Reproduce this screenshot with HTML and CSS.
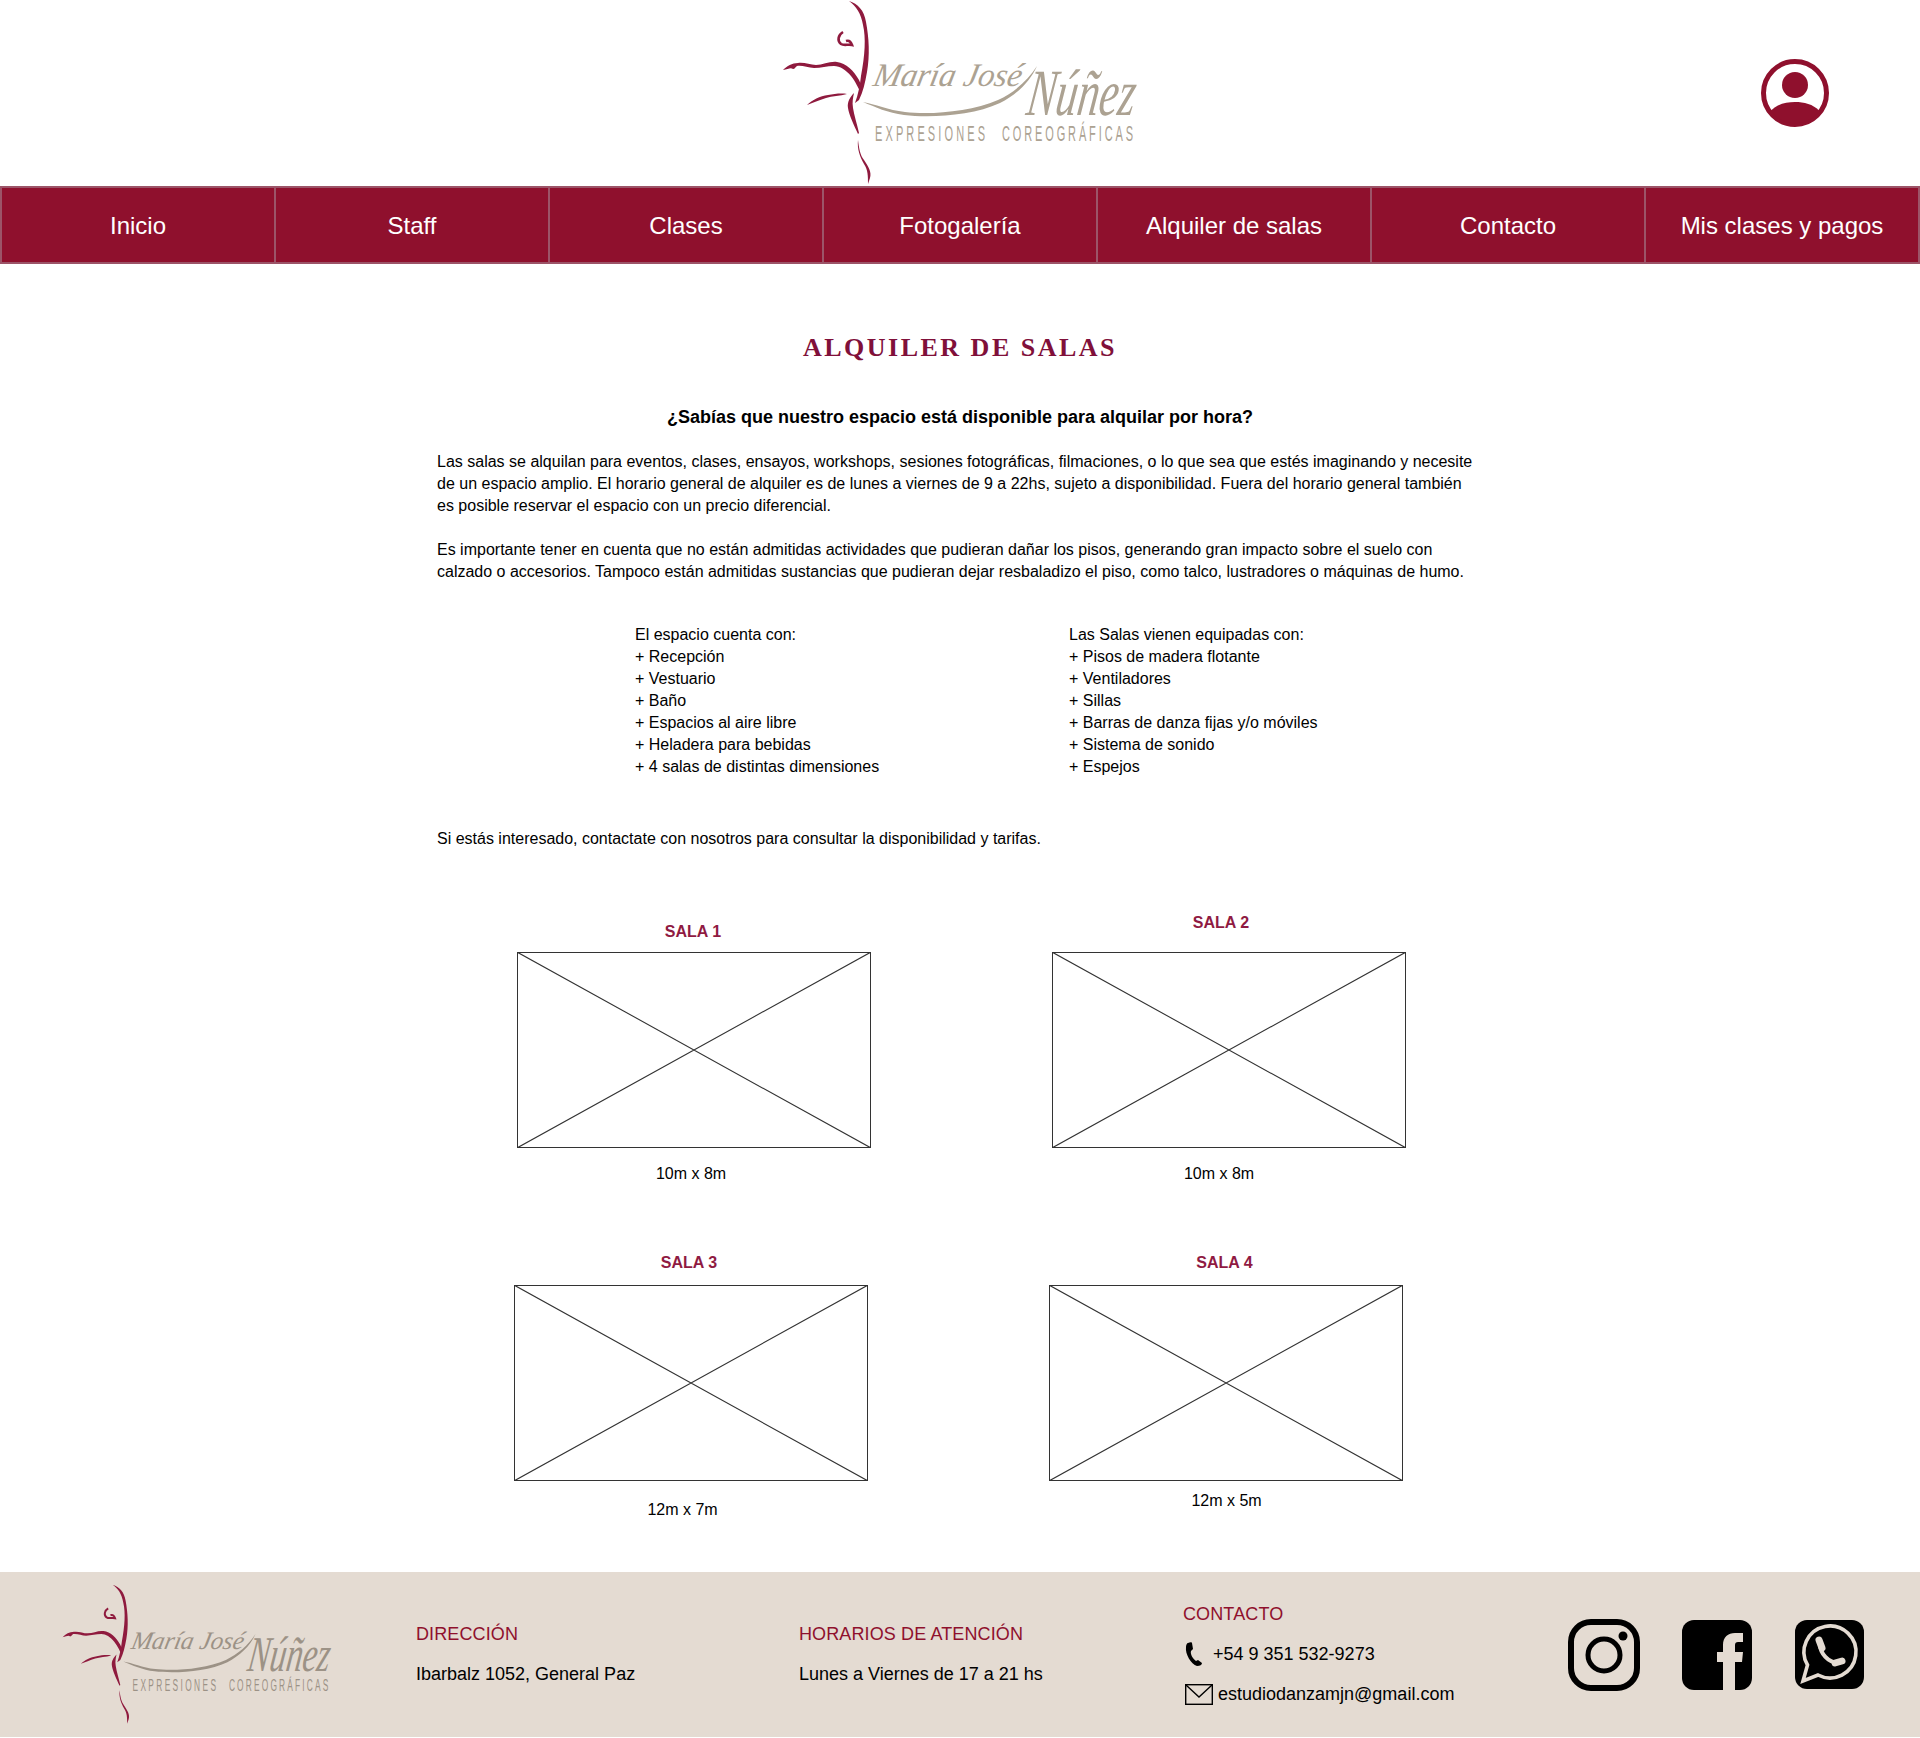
FILE: index.html
```html
<!DOCTYPE html>
<html lang="es">
<head>
  <meta charset="UTF-8">
  <title>Alquiler de salas</title>
  <link rel="stylesheet" href="styles.css">
</head>
<body>
  <svg class="sprite" xmlns="http://www.w3.org/2000/svg">
    <symbol id="logo" viewBox="0 0 360 187">
      <!-- dancer -->
      <path class="logo-fill" d="M69 1C78 4 84 10 86 22C89 38 90 55 87 72C85 83 83 92 79 100L75 103C78 95 80 85 81 76C85 55 86 38 83 25C81 13 76 6 69 1Z"/>
      <path class="logo-line" stroke-width="2.6" d="M63 32C58 35 57 41 61 44C64 46 68 44 72 45C71 42 69 40 66 41"/>
      <path class="logo-fill" d="M3 70C7 66 12 63 18 63C24 62 30 65 36 65C43 65 50 61 57 62C66 63 74 71 79 80C81 84 82 88 81 93C78 88 76 82 71 76C66 70 60 66 54 66C47 66 41 68 34 68C28 68 22 65 17 66C15 67 15 69 13 69C11 67 8 69 3 70Z"/>
      <path class="logo-fill" d="M27 105C32 100 40 96 48 95C54 94 61 93 67 94C60 96 52 96 46 98C39 100 33 103 27 105Z"/>
      <path class="logo-fill" d="M74 93C70 97 67 102 68 108C69 115 74 125 78 134L79 133C77 124 74 115 73 108C72 102 73 98 74 93Z"/>
      <path class="logo-fill" d="M78 140C79 148 80 155 84 160C88 166 92 172 90 178L88 184C88 176 88 170 84 164C80 157 77 149 78 140Z"/>
      <!-- lettering -->
      <path class="logo-text-fill" d="M83 102C95 104 108 110 125 112C150 115 190 112 218 100C234 93 248 80 257 66C250 82 236 95 220 103C192 116 150 118 124 115C108 113 95 107 83 102Z"/>
      <text class="logo-script" transform="translate(92 86) skewX(-12)" font-size="33" textLength="148" lengthAdjust="spacingAndGlyphs">María José</text>
      <text class="logo-script" transform="translate(245 115) skewX(-8)" font-size="66" textLength="108" lengthAdjust="spacingAndGlyphs">Núñez</text>
      <text class="logo-caps" transform="translate(95 141) scale(.5 1)" font-size="22" textLength="220" lengthAdjust="spacing">EXPRESIONES</text>
      <text class="logo-caps" transform="translate(222 141) scale(.5 1)" font-size="22" textLength="262" lengthAdjust="spacing">COREOGRÁFICAS</text>
    </symbol>
  </svg>

  <header class="header">
    <div></div>
    <svg class="header-logo"><use href="#logo"/></svg>
    <div class="header-user">
      <svg class="user-icon" viewBox="0 0 68 68">
        <circle cx="34" cy="34" r="31.5" fill="none" stroke="#8f102d" stroke-width="5"/>
        <circle cx="34" cy="26" r="13" fill="#8f102d"/>
        <path fill="#8f102d" d="M9.6 52C16 45 25 43 34 43C43 43 52 45 58.4 52A30.4 30.4 0 0 1 9.6 52Z"/>
      </svg>
    </div>
  </header>

  <nav class="nav">
    <a class="nav-item">Inicio</a>
    <a class="nav-item">Staff</a>
    <a class="nav-item">Clases</a>
    <a class="nav-item">Fotogalería</a>
    <a class="nav-item">Alquiler de salas</a>
    <a class="nav-item">Contacto</a>
    <a class="nav-item">Mis clases y pagos</a>
  </nav>

  <main class="content">
    <h1 class="heading">ALQUILER DE SALAS</h1>
    <h2 class="subheading">¿Sabías que nuestro espacio está disponible para alquilar por hora?</h2>

    <p class="text">Las salas se alquilan para eventos, clases, ensayos, workshops, sesiones fotográficas, filmaciones, o lo que sea que estés imaginando y necesite<br>de un espacio amplio. El horario general de alquiler es de lunes a viernes de 9 a 22hs, sujeto a disponibilidad. Fuera del horario general también<br>es posible reservar el espacio con un precio diferencial.</p>
    <p class="text text-second">Es importante tener en cuenta que no están admitidas actividades que pudieran dañar los pisos, generando gran impacto sobre el suelo con<br>calzado o accesorios. Tampoco están admitidas sustancias que pudieran dejar resbaladizo el piso, como talco, lustradores o máquinas de humo.</p>

    <div class="lists">
      <ul class="list">
        <li>El espacio cuenta con:</li>
        <li>+ Recepción</li>
        <li>+ Vestuario</li>
        <li>+ Baño</li>
        <li>+ Espacios al aire libre</li>
        <li>+ Heladera para bebidas</li>
        <li>+ 4 salas de distintas dimensiones</li>
      </ul>
      <ul class="list">
        <li>Las Salas vienen equipadas con:</li>
        <li>+ Pisos de madera flotante</li>
        <li>+ Ventiladores</li>
        <li>+ Sillas</li>
        <li>+ Barras de danza fijas y/o móviles</li>
        <li>+ Sistema de sonido</li>
        <li>+ Espejos</li>
      </ul>
    </div>

    <p class="text text-contact">Si estás interesado, contactate con nosotros para consultar la disponibilidad y tarifas.</p>

    <div class="salas">
      <div class="sala sala-1">
        <div class="sala-title">SALA 1</div>
        <svg class="sala-img" viewBox="0 0 354 196"><rect x=".5" y=".5" width="353" height="195"/><path d="M0 0L354 196M354 0L0 196"/></svg>
        <div class="sala-size">10m x 8m</div>
      </div>
      <div class="sala sala-2">
        <div class="sala-title">SALA 2</div>
        <svg class="sala-img" viewBox="0 0 354 196"><rect x=".5" y=".5" width="353" height="195"/><path d="M0 0L354 196M354 0L0 196"/></svg>
        <div class="sala-size">10m x 8m</div>
      </div>
      <div class="sala sala-3">
        <div class="sala-title">SALA 3</div>
        <svg class="sala-img" viewBox="0 0 354 196"><rect x=".5" y=".5" width="353" height="195"/><path d="M0 0L354 196M354 0L0 196"/></svg>
        <div class="sala-size">12m x 7m</div>
      </div>
      <div class="sala sala-4">
        <div class="sala-title">SALA 4</div>
        <svg class="sala-img" viewBox="0 0 354 196"><rect x=".5" y=".5" width="353" height="195"/><path d="M0 0L354 196M354 0L0 196"/></svg>
        <div class="sala-size">12m x 5m</div>
      </div>
    </div>
  </main>

  <footer class="footer">
    <svg class="footer-logo"><use href="#logo"/></svg>
    <div class="footer-col">
      <div class="footer-title">DIRECCIÓN</div>
      <div>Ibarbalz 1052, General Paz</div>
    </div>
    <div class="footer-col">
      <div class="footer-title">HORARIOS DE ATENCIÓN</div>
      <div>Lunes a Viernes de 17 a 21 hs</div>
    </div>
    <div class="footer-col">
      <div class="footer-title">CONTACTO</div>
      <div class="contact-row">
        <svg class="phone-icon" viewBox="0 0 18 24"><path d="M3 1C5 0 7 0 7 1L8 7L6 9C5 12 8 17 11 19L13 18L17 21C17 23 15 24 12 24C6 22 0 12 1 5C1 3 2 1 3 1Z"/></svg>
        <span>+54 9 351 532-9273</span>
      </div>
      <div class="contact-row">
        <svg class="mail-icon" viewBox="0 0 28 21"><rect x=".7" y=".7" width="26.6" height="19.6"/><path d="M1 1L14 13L27 1"/></svg>
        <span>estudiodanzamjn@gmail.com</span>
      </div>
    </div>
    <div class="social">
      <svg class="social-ig" viewBox="0 0 72 72">
        <rect x="3" y="3" width="66" height="66" rx="20" fill="none" stroke="#000" stroke-width="6"/>
        <circle cx="36" cy="36" r="16" fill="none" stroke="#000" stroke-width="5"/>
        <circle cx="55" cy="17" r="4.5"/>
      </svg>
      <svg class="social-fb" viewBox="0 0 70 70">
        <rect width="70" height="70" rx="12"/>
        <path class="social-cut" d="M41 70V42H35V32H41V25C41 17 46 13 53 13H61V22H56C54 22 53 23 53 25V32H61L60 42H53V70Z"/>
      </svg>
      <svg class="social-wa" viewBox="0 0 69 69">
        <rect width="69" height="69" rx="12"/>
        <path class="social-ring" d="M8 61L12.5 45A26 26 0 1 1 23 55Z"/>
        <path class="social-phone" d="M25 24C25 33 33 43 44 43"/>
        <path class="social-phone social-phone-end" d="M24 20L27 28M40 43L47 41"/>
      </svg>
    </div>
  </footer>
</body>
</html>
```

FILE: styles.css
```css
body {
  margin: 0;
  font-family: "Liberation Sans", Arial, sans-serif;
  font-size: 16px;
  color: #000;
  background: #fff;
}
.sprite {
  display: none;
}

/* logo */
.logo-fill {
  fill: #8f1a3e;
}
.logo-line {
  fill: none;
  stroke: #8f1a3e;
}
.logo-text-fill {
  fill: currentColor;
}
.logo-script {
  font-family: "Liberation Serif", serif;
  font-style: italic;
  fill: currentColor;
}
.logo-caps {
  font-family: "Liberation Sans", sans-serif;
  fill: currentColor;
}

/* header */
.header {
  display: grid;
  grid-template-columns: 1fr 360px 1fr;
  align-items: center;
  height: 186px;
}
.header-logo {
  display: block;
  width: 360px;
  height: 187px;
  color: #aca292;
}
.header-user {
  display: flex;
  justify-content: flex-end;
  padding: 0 91px 2px 0;
}
.user-icon {
  display: block;
  width: 68px;
  height: 68px;
}

/* nav */
.nav {
  display: grid;
  grid-template-columns: repeat(7, 1fr);
  border: 1px solid #9c5468;
}
.nav-item {
  display: flex;
  align-items: center;
  justify-content: center;
  height: 72px;
  padding-top: 2px;
  background: #8f102d;
  border: 1px solid #9c5468;
  color: #fff;
  font-size: 24px;
}

/* content */
.content {
  padding: 69px 0 51px 437px;
}
.heading {
  margin: 0 437px 43px 0;
  font-family: "Liberation Serif", serif;
  font-size: 26px;
  line-height: 30px;
  letter-spacing: 2.5px;
  font-weight: bold;
  text-align: center;
  color: #80103a;
}
.subheading {
  margin: 0 437px 23px 0;
  font-size: 18px;
  line-height: 22px;
  font-weight: bold;
  text-align: center;
}
.text {
  margin: 0;
  line-height: 22px;
}
.text-second {
  margin-top: 22px;
}
.text-contact {
  margin-top: 50px;
}
.lists {
  display: grid;
  grid-template-columns: 434px 1fr;
  margin: 41px 0 0 198px;
}
.list {
  margin: 0;
  padding: 0;
  list-style: none;
  line-height: 22px;
}

/* salas */
.salas {
  display: grid;
  grid-template-columns: 354px 354px;
  column-gap: 181px;
  row-gap: 68px;
  align-items: start;
  margin: 63px 0 0 80px;
}
.sala-title {
  font-size: 16px;
  line-height: 20px;
  font-weight: bold;
  text-align: center;
  color: #8f1a42;
}
.sala-img {
  display: block;
  width: 354px;
  height: 196px;
}
.sala-img rect {
  fill: #fff;
  stroke: #333;
}
.sala-img path {
  fill: none;
  stroke: #333;
  stroke-width: 1.1;
}
.sala-size {
  line-height: 22px;
  text-align: center;
}

.sala-1 .sala-title {
  margin: 9px 0 10px;
  padding-right: 2px;
}
.sala-1 .sala-size {
  margin-top: 15px;
  padding-right: 6px;
}
.sala-2 .sala-title {
  margin-bottom: 19px;
  padding-right: 16px;
}
.sala-2 .sala-size {
  margin-top: 15px;
  padding-right: 20px;
}
.sala-3,
.sala-4 {
  margin-left: -3px;
}
.sala-3 .sala-title {
  margin-bottom: 12px;
  padding-right: 7px;
}
.sala-4 .sala-title {
  margin-bottom: 12px;
  padding-right: 6px;
}
.sala-3 .sala-size {
  margin-top: 18px;
  padding-right: 20px;
}
.sala-4 .sala-size {
  margin-top: 9px;
  padding-right: 2px;
}

/* footer */
.footer {
  box-sizing: border-box;
  display: grid;
  grid-template-columns: 356px 383px 384px 385px 1fr;
  align-items: center;
  height: 165px;
  padding: 0 0 2px 60px;
  background: #e4dbd2;
  font-size: 18px;
  line-height: 22px;
}
.footer-logo {
  display: block;
  width: 274px;
  height: 142px;
  margin-top: 2px;
  color: #9c9286;
}
.footer-col {
  display: flex;
  flex-direction: column;
  gap: 18px;
}
.footer-title {
  color: #8f102d;
  letter-spacing: .12px;
}
.contact-row {
  display: flex;
  align-items: center;
  height: 22px;
}
.phone-icon {
  width: 18px;
  height: 24px;
  margin: 0 10px 0 2px;
}
.mail-icon {
  width: 28px;
  height: 21px;
  margin: 2px 5px 0 2px;
}
.mail-icon rect,
.mail-icon path {
  fill: none;
  stroke: #000;
  stroke-width: 1.4;
}
.social {
  display: flex;
  align-items: center;
  gap: 42px;
  margin-top: 2px;
}
.social-ig {
  width: 72px;
  height: 72px;
}
.social-fb {
  width: 70px;
  height: 70px;
}
.social-wa {
  width: 69px;
  height: 69px;
  margin-left: 1px;
}
.social-cut {
  fill: #e4dbd2;
}
.social-ring {
  fill: none;
  stroke: #e4dbd2;
  stroke-width: 3.6;
}
.social-phone {
  fill: none;
  stroke: #e4dbd2;
  stroke-width: 4;
  stroke-linecap: round;
}
.social-phone-end {
  stroke-width: 7;
}
```
